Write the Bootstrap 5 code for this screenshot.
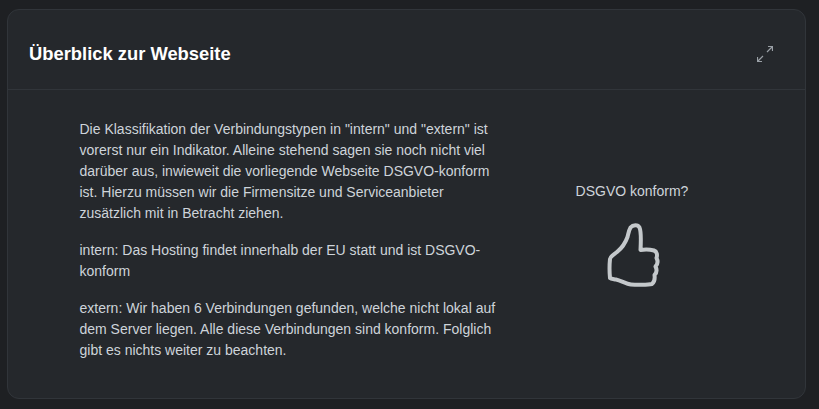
<!DOCTYPE html>
<html lang="de">

<head>
    <meta charset="UTF-8">
    <title>Überblick zur Webseite</title>
    <link href="https://cdn.jsdelivr.net/npm/bootstrap@5.3.0/dist/css/bootstrap.min.css" rel="stylesheet">
    <style>
        body {
            margin: 0;
            padding: 9px 13px 10px 7px;
            background-color: #1e2023;
            font-family: "Liberation Sans", Arial, sans-serif;
            font-size: 14px;
            line-height: 21px;
            color: #ced4da;
        }

        .panel-card {
            height: 390px;
            background-color: #25282c;
            border: 1px solid #31353a;
            border-radius: 12px;
            color: #ced4da;
        }

        .panel-head {
            height: 80px;
            padding: 8px 32px 0 21px;
            background: transparent;
            border-bottom: 1px solid #31353a;
        }

        .panel-title {
            font-size: 18.375px;
            font-weight: 700;
            line-height: 27px;
            color: #fff;
        }

        .panel-body {
            padding: 29px 0 0 71.5px;
        }

        .panel-text {
            width: 424px;
        }

        .panel-text p {
            margin-bottom: 16px;
        }

        .verdict {
            width: 136px;
            margin-left: 60.5px;
            padding-top: 62px;
        }

        .verdict-label {
            margin-bottom: 17px;
        }
    </style>
</head>

<body>
    <div class="card panel-card">
        <div class="card-header panel-head d-flex align-items-center justify-content-between">
            <h5 class="panel-title m-0">Überblick zur Webseite</h5>
            <svg width="16" height="16" viewBox="0 0 16 16" fill="none" stroke="#9aa0a6" stroke-width="1.2">
                <path d="M10 6 15.500 .5M11 .5H15.500V5M6 10 .5 15.500M.5 11V15.500H5" />
            </svg>
        </div>
        <div class="card-body panel-body d-flex">
            <div class="panel-text">
                <p>Die Klassifikation der Verbindungstypen in "intern" und "extern" ist vorerst nur ein Indikator. Alleine stehend sagen sie noch nicht viel darüber aus, inwieweit die vorliegende Webseite DSGVO-konform ist. Hierzu müssen wir die Firmensitze und Serviceanbieter zusätzlich mit in Betracht ziehen.</p>
                <p>intern: Das Hosting findet innerhalb der EU statt und ist DSGVO-konform</p>
                <p class="mb-0">extern: Wir haben 6 Verbindungen gefunden, welche nicht lokal auf dem Server liegen. Alle diese Verbindungen sind konform. Folglich gibt es nichts weiter zu beachten.</p>
            </div>
            <div class="verdict text-center">
                <div class="verdict-label">DSGVO konform?</div>
                <svg width="56" height="68" viewBox="0 0 56 68" fill="none" stroke="#c4c8cb" stroke-width="4" stroke-linejoin="round" stroke-linecap="round">
                    <path d="M36.500 31C40 30.500 46 30.500 50 31.500C53 32.500 53.500 36 52.500 39C54 42 53.500 45.500 51.500 47.500C53 50.500 52.500 54 50.500 56C51 59.500 50.500 63 48 65C44 66 32 66 27 65.500C22 65 17 61.500 12 60.500C9 60 7 60 6 59C5.500 54 5.500 45 6 40C6.500 37 10 35.500 13 33C18 29 21 25 23.500 18C24.500 14 25 11 26.500 8.500C29 5.500 34 5.500 35.500 8.500C37 12 37 22 36.500 31Z" />
                </svg>
            </div>
        </div>
    </div>

    <script src="https://cdn.jsdelivr.net/npm/bootstrap@5.3.0/dist/js/bootstrap.bundle.min.js"></script>
</body>

</html>
